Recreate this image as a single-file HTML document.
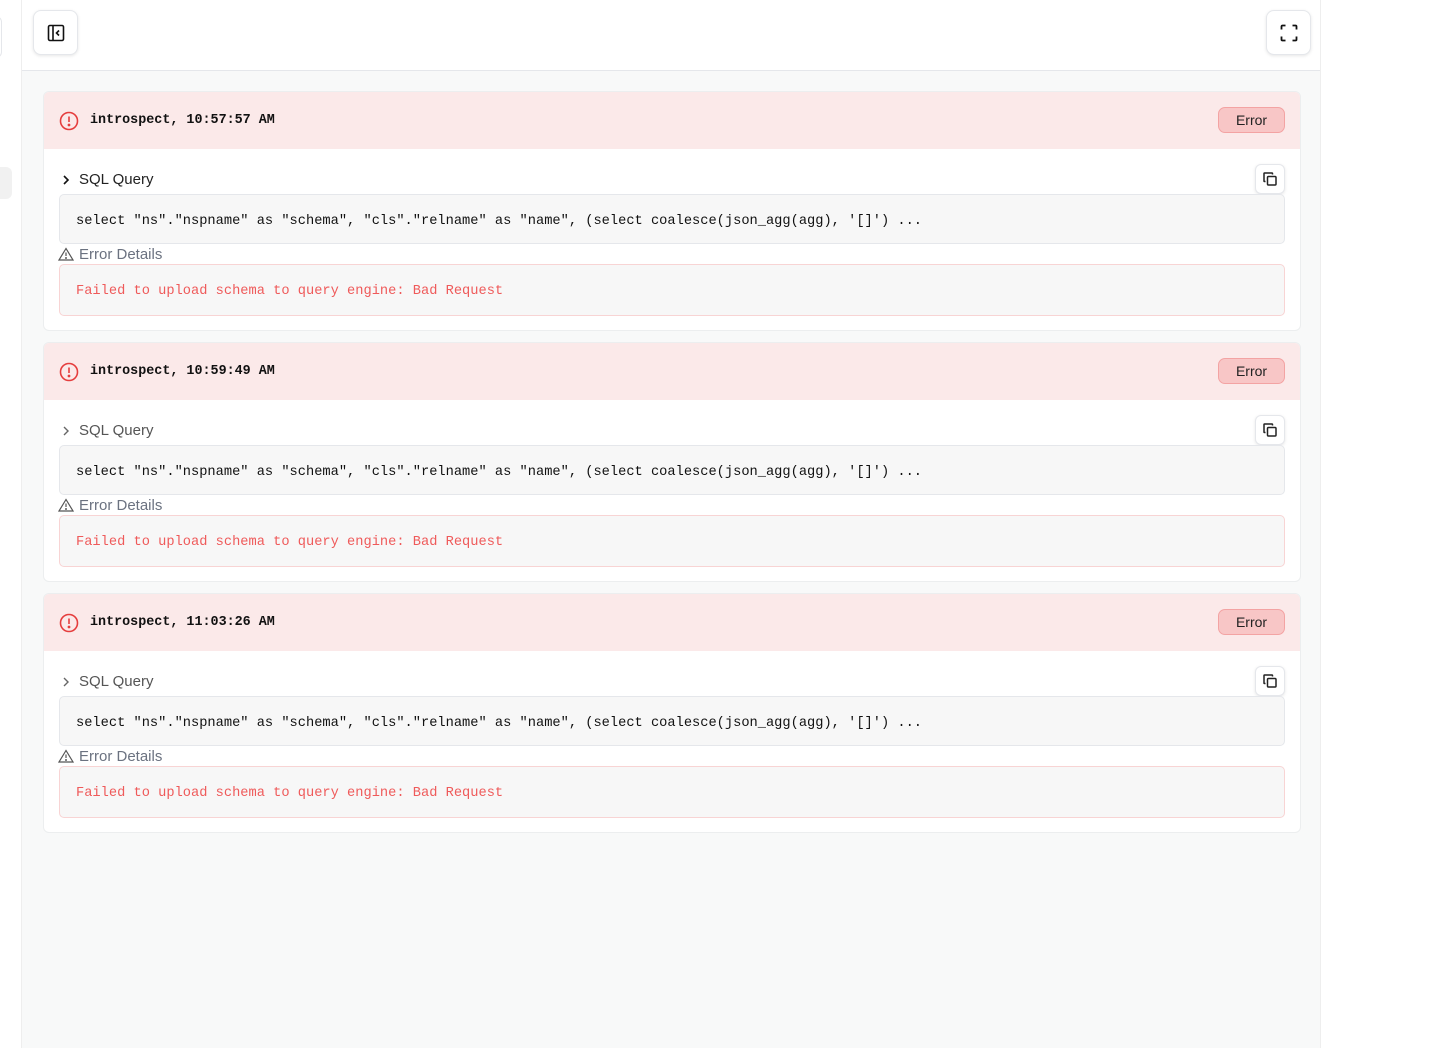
<!DOCTYPE html>
<html><head><style>
*{box-sizing:border-box;margin:0;padding:0}
body{width:1442px;height:1048px;background:#fff;font-family:"Liberation Sans",sans-serif;position:relative;overflow:hidden}
.side{position:absolute;left:0;top:0;width:22px;height:1048px;background:#fff}
.main{position:absolute;left:21px;top:0;width:1300px;height:1048px;background:#f8f9f9;border-left:1px solid #eee;border-right:1px solid #eee}
.hdr{height:71px;background:#fff;border-bottom:1px solid #e5e7eb;position:relative}
.btn{position:absolute;width:45px;height:45px;border:1px solid #e5e7eb;border-radius:8px;background:#fff;box-shadow:0 1px 3px rgba(0,0,0,.1);display:flex;align-items:center;justify-content:center}
.card{position:absolute;left:21px;width:1258px;height:240px;background:#fff;border:1px solid #eceeef;border-radius:6px;overflow:hidden}
.ch{height:57px;background:#fbe9e9;position:relative}
.ttl{position:absolute;left:46px;top:21px;font-family:"Liberation Mono",monospace;font-weight:bold;font-size:13.4px;color:#111}
.ico{position:absolute;left:15px;top:19px}
.badge{position:absolute;right:15px;top:15px;width:67px;height:26px;border:1px solid #f3a3a3;background:#f8c6c6;border-radius:7px;font-size:14px;color:#222;text-align:center;line-height:24px}
.sq{position:absolute;left:35px;top:79px;font-size:15px;color:#222}
.chev{position:absolute;left:17px;top:82px}
.copy{position:absolute;right:15px;top:72px;width:30px;height:30px;border:1px solid #e5e7eb;border-radius:6px;background:#fff;box-shadow:0 1px 3px rgba(0,0,0,.1);display:flex;align-items:center;justify-content:center}
.code{position:absolute;left:15px;right:15px;top:102px;height:50px;border:1px solid #e5e7eb;border-radius:5px;background:#f7f7f7;padding:0 0 0 16px;line-height:54px;font-family:"Liberation Mono",monospace;font-size:13.7px;color:#111;white-space:pre}
.ed{position:absolute;left:35px;top:154px;font-size:15px;color:#6b7280}
.warn{position:absolute;left:14px;top:155px}
.err{position:absolute;left:15px;right:15px;top:172px;height:52px;border:1px solid #f8d4d4;border-radius:5px;background:#f7f7f7;padding-left:16px;line-height:53px;font-family:"Liberation Mono",monospace;font-size:13.7px;color:#ef5a5a;white-space:pre}
</style></head><body>
<div class="side">
<div style="position:absolute;left:-10px;top:16px;width:12px;height:42px;border:1px solid #e5e7eb;border-radius:6px;background:#fff"></div>
<div style="position:absolute;left:-10px;top:167px;width:22px;height:32px;border-radius:6px;background:#f1f1f1"></div>
</div>
<div class="main">
<div class="hdr">
<div class="btn" style="left:11px;top:10px"><svg width="18" height="18" viewBox="0 0 18 18" fill="none" stroke="#111" stroke-width="1.6"><rect x="1.5" y="1.5" width="15" height="15" rx="1.5"/><line x1="6" y1="1.5" x2="6" y2="16.5"/><path d="M12 6.5 L9.5 9 L12 11.5"/></svg></div>
<div class="btn" style="left:1244px;top:10px"><svg width="18" height="18" viewBox="0 0 18 18" fill="none" stroke="#111" stroke-width="1.8"><path d="M1.5 5.5V2.5a1 1 0 0 1 1-1h3M12.5 1.5h3a1 1 0 0 1 1 1v3M16.5 12.5v3a1 1 0 0 1-1 1h-3M5.5 16.5h-3a1 1 0 0 1-1-1v-3"/></svg></div>
</div>

<div class="card" style="top:91px">
<div class="ch"><svg class="ico" width="20" height="20" viewBox="0 0 20 20" fill="none" stroke="#e53e3e" stroke-width="1.6"><circle cx="10" cy="10" r="8.5"/><line x1="10" y1="5.5" x2="10" y2="11"/><circle cx="10" cy="14" r=".6" fill="#e53e3e"/></svg><div class="ttl">introspect, 10:57:57 AM</div><div class="badge">Error</div></div>
<svg class="chev" width="10" height="12" viewBox="0 0 10 12" fill="none" stroke="#111" stroke-width="1.6"><path d="M3 2l4 4-4 4"/></svg><div class="sq">SQL Query</div>
<div class="copy"><svg width="16" height="16" viewBox="0 0 16 16" fill="none" stroke="#222" stroke-width="1.5"><rect x="5.5" y="5.5" width="8.5" height="8.5" rx="1"/><path d="M3.5 10.5h-1a.5.5 0 0 1-.5-.5V2.5a.5.5 0 0 1 .5-.5H10a.5.5 0 0 1 .5.5v1"/></svg></div>
<div class="code">select "ns"."nspname" as "schema", "cls"."relname" as "name", (select coalesce(json_agg(agg), '[]') ...</div>
<svg class="warn" width="16" height="14" viewBox="0 0 16 14" fill="none" stroke="#555" stroke-width="1.2"><path d="M8 1.5L1 13h14z"/><line x1="8" y1="5.5" x2="8" y2="9"/><circle cx="8" cy="11" r=".4"/></svg><div class="ed">Error Details</div>
<div class="err">Failed to upload schema to query engine: Bad Request</div>
</div>

<div class="card" style="top:342px">
<div class="ch"><svg class="ico" width="20" height="20" viewBox="0 0 20 20" fill="none" stroke="#e53e3e" stroke-width="1.6"><circle cx="10" cy="10" r="8.5"/><line x1="10" y1="5.5" x2="10" y2="11"/><circle cx="10" cy="14" r=".6" fill="#e53e3e"/></svg><div class="ttl">introspect, 10:59:49 AM</div><div class="badge">Error</div></div>
<svg class="chev" width="10" height="12" viewBox="0 0 10 12" fill="none" stroke="#666" stroke-width="1.4"><path d="M3 2l4 4-4 4"/></svg><div class="sq" style="color:#555">SQL Query</div>
<div class="copy"><svg width="16" height="16" viewBox="0 0 16 16" fill="none" stroke="#222" stroke-width="1.5"><rect x="5.5" y="5.5" width="8.5" height="8.5" rx="1"/><path d="M3.5 10.5h-1a.5.5 0 0 1-.5-.5V2.5a.5.5 0 0 1 .5-.5H10a.5.5 0 0 1 .5.5v1"/></svg></div>
<div class="code">select "ns"."nspname" as "schema", "cls"."relname" as "name", (select coalesce(json_agg(agg), '[]') ...</div>
<svg class="warn" width="16" height="14" viewBox="0 0 16 14" fill="none" stroke="#555" stroke-width="1.2"><path d="M8 1.5L1 13h14z"/><line x1="8" y1="5.5" x2="8" y2="9"/><circle cx="8" cy="11" r=".4"/></svg><div class="ed">Error Details</div>
<div class="err">Failed to upload schema to query engine: Bad Request</div>
</div>

<div class="card" style="top:593px">
<div class="ch"><svg class="ico" width="20" height="20" viewBox="0 0 20 20" fill="none" stroke="#e53e3e" stroke-width="1.6"><circle cx="10" cy="10" r="8.5"/><line x1="10" y1="5.5" x2="10" y2="11"/><circle cx="10" cy="14" r=".6" fill="#e53e3e"/></svg><div class="ttl">introspect, 11:03:26 AM</div><div class="badge">Error</div></div>
<svg class="chev" width="10" height="12" viewBox="0 0 10 12" fill="none" stroke="#666" stroke-width="1.4"><path d="M3 2l4 4-4 4"/></svg><div class="sq" style="color:#555">SQL Query</div>
<div class="copy"><svg width="16" height="16" viewBox="0 0 16 16" fill="none" stroke="#222" stroke-width="1.5"><rect x="5.5" y="5.5" width="8.5" height="8.5" rx="1"/><path d="M3.5 10.5h-1a.5.5 0 0 1-.5-.5V2.5a.5.5 0 0 1 .5-.5H10a.5.5 0 0 1 .5.5v1"/></svg></div>
<div class="code">select "ns"."nspname" as "schema", "cls"."relname" as "name", (select coalesce(json_agg(agg), '[]') ...</div>
<svg class="warn" width="16" height="14" viewBox="0 0 16 14" fill="none" stroke="#555" stroke-width="1.2"><path d="M8 1.5L1 13h14z"/><line x1="8" y1="5.5" x2="8" y2="9"/><circle cx="8" cy="11" r=".4"/></svg><div class="ed">Error Details</div>
<div class="err">Failed to upload schema to query engine: Bad Request</div>
</div>
</div>
</body></html>
